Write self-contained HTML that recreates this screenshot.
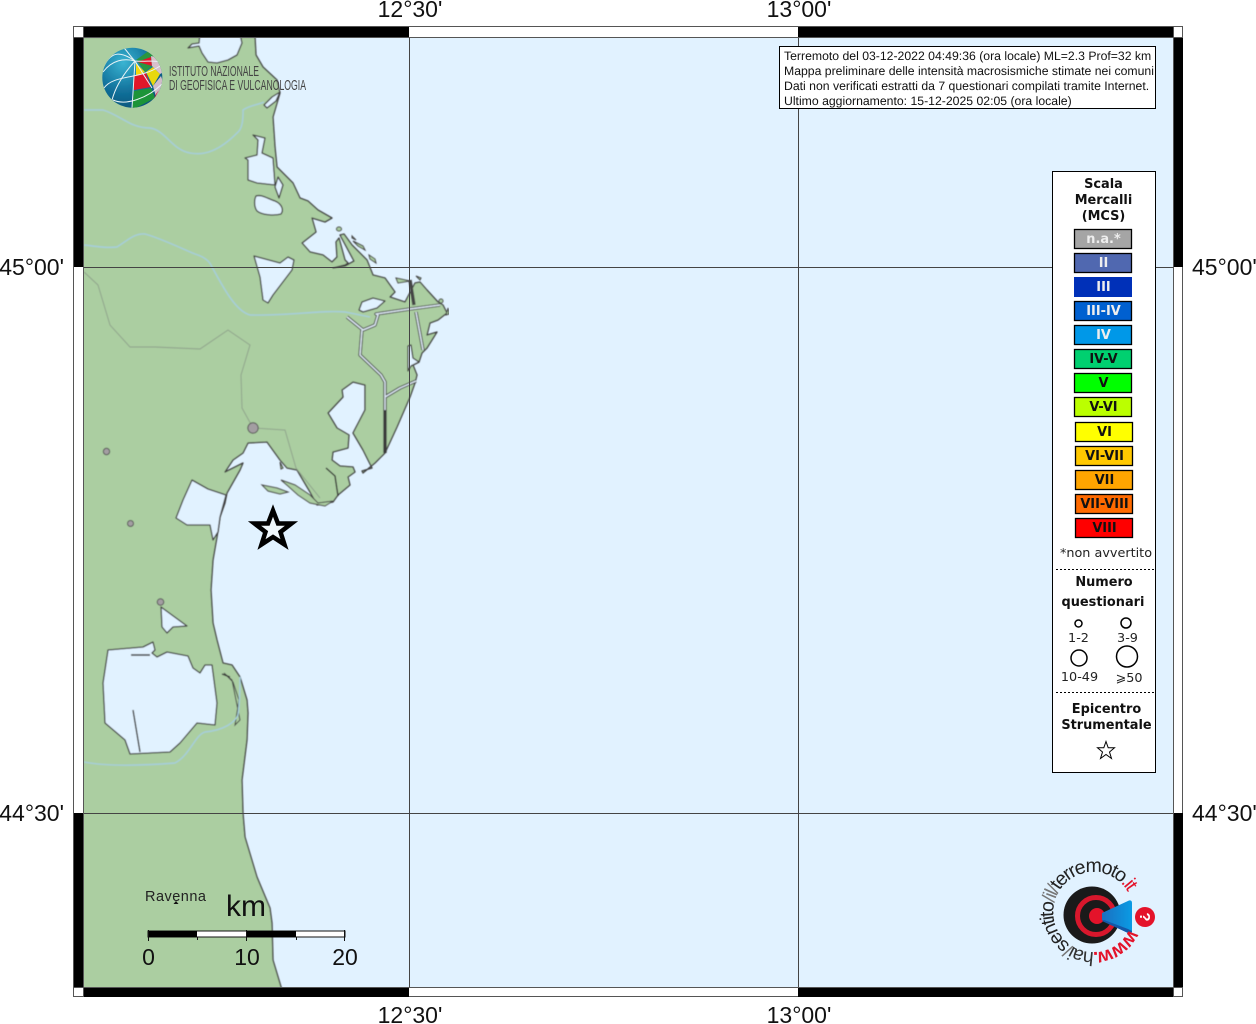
<!DOCTYPE html>
<html><head><meta charset="utf-8"><title>Mappa</title>
<style>html,body{margin:0;padding:0;background:#fff}svg{display:block}
.g{font-family:"Liberation Sans",sans-serif}
.d{font-family:"DejaVu Sans",sans-serif}
.lb{font-family:"DejaVu Sans",sans-serif;font-weight:bold;font-size:12.9px;text-anchor:middle}
</style></head><body>
<svg width="1256" height="1024" viewBox="0 0 1256 1024" xmlns="http://www.w3.org/2000/svg">
<defs>
<radialGradient id="gb" cx="0.35" cy="0.25" r="0.85"><stop offset="0" stop-color="#3ab4d2"/><stop offset="0.55" stop-color="#12729c"/><stop offset="1" stop-color="#0b4f74"/></radialGradient>
<linearGradient id="cone" x1="0" y1="0" x2="1" y2="0"><stop offset="0" stop-color="#1a6fc0"/><stop offset="1" stop-color="#0a9be4"/></linearGradient>
<clipPath id="mc"><rect x="84" y="37" width="1089" height="950"/></clipPath>
<clipPath id="gc"><circle cx="132.3" cy="77.7" r="30"/></clipPath>
<clipPath id="ib"><rect x="780" y="47" width="375" height="61"/></clipPath>
<filter id="soft" x="0" y="0" width="100%" height="100%"><feGaussianBlur stdDeviation="0.45"/></filter>
<filter id="soft2" x="-5%" y="-5%" width="110%" height="110%"><feGaussianBlur stdDeviation="0.35"/></filter>
</defs>

<!-- map -->
<rect x="84" y="37" width="1089" height="950" fill="#e1f2ff"/>
<g clip-path="url(#mc)"><g filter="url(#soft)">
<path id="land" fill="#abcea1" stroke="#3f3f3f" stroke-width="1.300" stroke-linejoin="round" d="M80 37L255 37L256 55L263 67L277 80L280 93L273 117L275 147L277 167L293 183L300 198L308 201L318 210L332 218L325 222L312 218L316 232L302 243L310 252L323 255L332 262L337 257L336 242L339 238L345 260L348 263L345 265L333 268L345 266L354 261L340 235L344 234L352 245L367 260L373 275L385 278L395 292L390 297L405 302L415 283L420 282L427 290L438 302L443 305L447 313L438 320L430 323L427 335L437 332L427 348L422 353L419 362L413 365L417 375L415 383L410 397L397 427L385 453L375 463L363 473L362 471L372 468L363 450L353 433L365 410L365 385L353 382L342 390L343 397L328 413L337 428L349 435L348 448L333 452L332 460L340 466L353 467L355 472L348 477L350 485L338 495L333 502L317 505L310 492L297 470L287 468L280 460L267 442L248 443L243 453L233 460L225 472L243 463L240 470L227 493L225 503L220 517L217 537L213 560L211 590L213 623L217 640L223 663L232 665L240 677L247 700L248 713L247 740L242 780L243 813L245 837L257 877L270 908L272 923L273 960L282 990L80 990Z"/>
<g fill="#e1f2ff" stroke="#3f3f3f" stroke-width="1.300" stroke-linejoin="round">
<path d="M200 34L240 34L242 43L237 55L228 60L217 63L208 62L202 53L199 46L188 48L192 44L199 43Z"/>
<path d="M253 135L265 138L262 153L273 158L275 185L257 183L248 180L248 160L245 158L257 155L258 140Z"/>
<path d="M278 177L283 185L279 198L275 187Z"/>
<path d="M256 196C262 194 268 199 275 201C282 204 284 210 281 214C274 216 262 215 257 211C254 207 254 200 256 196Z"/>
<path d="M264 105L272 97L280 92L276 101L267 108Z"/>
<path d="M254 256L280 263L288 257L294 260L292 270L273 295L268 303L263 300L260 277Z"/>
<path d="M359 310L362 302L373 298L385 301L377 308L363 312Z"/>
<path d="M192 480L208 489L226 495L220 517L218 532L213 540L210 525L187 525L176 518L183 500Z"/>
<path d="M161 607L187 626L173 627L167 633L162 627Z"/>
<path d="M108 650L143 647L153 642L155 650L152 653L157 657L167 652L188 656L193 668L200 673L205 665L212 665L217 703L215 725L197 723L180 743L170 752L130 754L125 740L105 723L103 683Z"/>
<path d="M408 346L411 345L413 358L419 362L411 366L408 371Z"/>
</g>
<!-- islands -->
<g fill="#abcea1" stroke="#444" stroke-width="1">
<path d="M262 485L277 488L288 492L280 494L268 491Z"/>
<path d="M281 480L295 485L310 495L318 503L333 501L325 506L310 503L298 495L288 486Z"/>
<path d="M280 462L283 468L281 469Z"/>
<ellipse cx="339" cy="229" rx="2.5" ry="2"/>
<path d="M352 236L356 240L352 238Z"/>
<path d="M353 241L363 246L365 250L358 246Z"/>
<path d="M369 255L375 259L376 263L370 259Z"/>
<path d="M396 278L410 281L398 283Z"/>
<path d="M416 276L421 278L420 280Z"/>
<ellipse cx="441" cy="301" rx="2" ry="2"/>
<path d="M448 308L449 314L446 315Z"/>
<path d="M224 673L232 680L236 700L240 720L235 725L239 700L233 682Z"/>
</g>
<!-- channels -->
<g fill="none" stroke-linejoin="round">
<path id="ch" stroke="#444" stroke-width="3.400" d="M347 317L363 330L375 325L378 315L376 314L410 309L440 305M362 330L360 355L381 375L385 382L385 453M385 397L400 388L416 381M416 312L423 350M414 305L410 280"/>
<path stroke="#dbe8f2" stroke-width="1.500" d="M347 317L363 330L375 325L378 315L376 314L410 309L440 305M362 330L360 355L381 375L385 382L385 410M385 397L400 388L416 381M416 312L423 350"/>
<path stroke="#333" stroke-width="1.300" d="M385 410L385 453"/>
<path stroke="#333" stroke-width="1.400" d="M326 468L335 476L338 496M131 655L150 655M133 710L140 752M222 674L230 677"/>
</g>
<!-- rivers -->
<g fill="none" stroke="#a6cfdc" stroke-width="1.400">
<path d="M84 110L103 110C120 115 130 128 150 128C165 130 172 150 190 153C205 156 220 150 237 133C244 128 243 112 243 110C250 105 258 105 264 102"/>
<path d="M84 245C100 247 108 248 117 247C128 240 135 233 145 234C160 238 185 250 195 254C205 257 210 262 212 267C222 285 235 311 250 315C290 316 320 310 345 312L370 317"/>
<path d="M84 762C110 767 150 765 175 763C190 755 195 735 205 732C225 730 235 722 238 715C240 700 240 680 240 677"/>
</g>
<!-- region border -->
<path fill="none" stroke="#8d9f8a" stroke-width="0.900" d="M84 272L98 285L110 325L130 347L155 347L200 349L228 330L250 345L241 375L242 408L253 428L285 430L296 468L320 498"/>
<!-- cities -->
<g fill="#a39ea2" stroke="#555" stroke-width="1">
<circle cx="253" cy="428" r="5.200"/><circle cx="106.500" cy="451.500" r="3.200"/><circle cx="130.500" cy="523.500" r="3"/><circle cx="160.500" cy="602" r="3.300"/>
</g>
</g></g>
<!-- grid -->
<g stroke="#444" stroke-width="1"><path d="M409.500 37V987M798.500 37V987M84 267.500H1173M84 813.500H1173"/></g>

<!-- frame -->
<rect x="73.500" y="26.500" width="1109" height="970" fill="none" stroke="#555" stroke-width="1"/>
<g fill="#000">
<rect x="83" y="27" width="326" height="10"/><rect x="798" y="27" width="375" height="10"/>
<rect x="83" y="987" width="326" height="10"/><rect x="798" y="987" width="375" height="10"/>
<rect x="74" y="37" width="10" height="230"/><rect x="74" y="813" width="10" height="174"/>
<rect x="1173" y="37" width="10" height="230"/><rect x="1173" y="813" width="10" height="174"/>
</g>
<path stroke="#555" fill="none" d="M83.500 27V997M1173.500 27V997M74 37.500H1183M74 987.500H1183"/>

<!-- axis labels -->
<g class="g" font-size="23" fill="#111">
<text x="410" y="17" text-anchor="middle">12°30'</text><text x="799" y="17" text-anchor="middle">13°00'</text>
<text x="410" y="1023" text-anchor="middle">12°30'</text><text x="799" y="1023" text-anchor="middle">13°00'</text>
<text x="64" y="275" text-anchor="end">45°00'</text><text x="64" y="821" text-anchor="end">44°30'</text>
<text x="1192" y="275">45°00'</text><text x="1192" y="821">44°30'</text>
</g>

<!-- star -->
<path d="M273 510.500L278 523.500L291.500 523.500L280.500 532L284.500 544.500L273 537L261.500 544.500L265.500 532L254.500 523.500L268 523.500Z" fill="#eef6fb" stroke="#000" stroke-width="4.500" stroke-linejoin="miter"/>

<!-- INGV logo -->
<g filter="url(#soft2)">
<circle cx="132.300" cy="77.700" r="30" fill="url(#gb)"/>
<g clip-path="url(#gc)">
<path d="M160 58L150 50L136 60L152 64Z" fill="#2a9640"/>
<path d="M137 62L151 57L152 66Z" fill="#e0142c"/>
<path d="M136 63L145 72L136 76Z" fill="#f5d80c"/>
<path d="M138 62L152 66L145 72Z" fill="#2a9640"/>
<path d="M146 72L153 67L160 74L153 86Z" fill="#e8d80f"/>
<path d="M134 76L146 73L151 87L134 90Z" fill="#e0142c"/>
<path d="M151 56L160 58L164 72L160 74L152 66Z" fill="#d8c0cc"/>
<path d="M153 86L161 76L164 85L156 97Z" fill="#d0bcc8"/>
<path d="M134 91L151 88L155 98L132 110Z" fill="#1f9438"/>
<path d="M156 94L159 90L153 101Z" fill="#e0142c"/>
<g fill="none" stroke="#e8f3f6" stroke-width="1">
<path d="M135 61C125 72 116 85 112 100"/>
<path d="M135 61C122 52 112 50 104 66"/>
<path d="M135 61L132 108"/>
<path d="M135 61L152 88"/>
<path d="M135 61C130 56 128 52 124 48"/>
<path d="M103 72C112 60 124 58 135 61C145 62 155 60 160 62"/>
<path d="M104 88C114 74 140 80 160 66"/>
<path d="M113 100C126 106 148 98 162 84"/>
</g>
</g>
</g>
<g class="g" fill="#444" font-size="14.500">
<text x="169" y="76" textLength="90" lengthAdjust="spacingAndGlyphs">ISTITUTO NAZIONALE</text>
<text x="169" y="90" textLength="137" lengthAdjust="spacingAndGlyphs">DI GEOFISICA E VULCANOLOGIA</text>
</g>

<!-- info box -->
<rect x="779.500" y="46.500" width="376" height="62" fill="#fff" stroke="#000"/>
<g class="g" font-size="12.240" fill="#111" clip-path="url(#ib)" text-rendering="geometricPrecision">
<text x="784" y="60">Terremoto del 03-12-2022 04:49:36 (ora locale) ML=2.3 Prof=32 km</text>
<text x="784" y="75">Mappa preliminare delle intensità macrosismiche stimate nei comuni</text>
<text x="784" y="90">Dati non verificati estratti da 7 questionari compilati tramite Internet.</text>
<text x="784" y="105">Ultimo aggiornamento: 15-12-2025 02:05 (ora locale)</text>
</g>

<!-- legend -->
<rect x="1052.500" y="171.500" width="103" height="601" fill="#fff" stroke="#000"/>
<g class="lb" fill="#111">
<text x="1103.500" y="188" class="lb">Scala</text>
<text x="1103.500" y="204" class="lb">Mercalli</text>
<text x="1103.500" y="220" class="lb">(MCS)</text>
</g>
<g stroke="#000" stroke-width="1.300">
<rect x="1074.500" y="229.500" width="57" height="19" fill="#a5a5a5"/>
<rect x="1074.500" y="253.500" width="57" height="19" fill="#5068b0"/>
<rect x="1074" y="277" width="58" height="20" fill="#0030b8" stroke="none"/>
<rect x="1074.500" y="301.500" width="57" height="19" fill="#0060d0"/>
<rect x="1074.500" y="325.500" width="57" height="19" fill="#0098e8"/>
<rect x="1074.500" y="349.500" width="57" height="19" fill="#00d070"/>
<rect x="1074.500" y="373.500" width="57" height="19" fill="#00ff00"/>
<rect x="1074.500" y="397.500" width="57" height="19" fill="#bbff00"/>
<rect x="1075.500" y="422.500" width="57" height="19" fill="#ffff00"/>
<rect x="1075.500" y="446.500" width="57" height="19" fill="#ffc800"/>
<rect x="1075.500" y="470.500" width="57" height="19" fill="#ffa500"/>
<rect x="1075.500" y="494.500" width="57" height="19" fill="#ff6a00"/>
<rect x="1075.500" y="518.500" width="57" height="19" fill="#ff0000"/>
</g>
<g>
<text x="1103.500" y="243" class="lb" fill="#eee">n.a.*</text>
<text x="1103.500" y="267" class="lb" fill="#eee">II</text>
<text x="1103.500" y="291" class="lb" fill="#eee">III</text>
<text x="1103.500" y="315" class="lb" fill="#eee">III-IV</text>
<text x="1103.500" y="339" class="lb" fill="#eee">IV</text>
<text x="1103.500" y="363" class="lb" fill="#111">IV-V</text>
<text x="1103.500" y="387" class="lb" fill="#111">V</text>
<text x="1103.500" y="411" class="lb" fill="#111">V-VI</text>
<text x="1104.500" y="436" class="lb" fill="#111">VI</text>
<text x="1104.500" y="460" class="lb" fill="#111">VI-VII</text>
<text x="1104.500" y="484" class="lb" fill="#111">VII</text>
<text x="1104.500" y="508" class="lb" fill="#111">VII-VIII</text>
<text x="1104.500" y="532" class="lb" fill="#111">VIII</text>
</g>
<text x="1106" y="557" class="d" font-size="12.800" fill="#222" text-anchor="middle">*non avvertito</text>
<path d="M1056 569.500H1154M1056 692.500H1154" stroke="#000" stroke-dasharray="2 2" fill="none"/>
<text x="1104" y="586" class="lb" fill="#111">Numero</text>
<text x="1103" y="606" class="lb" fill="#111">questionari</text>
<g fill="#fff" stroke="#000" stroke-width="1.500">
<circle cx="1078.500" cy="623.500" r="3.500"/><circle cx="1126" cy="623" r="5"/><circle cx="1079" cy="658" r="8"/><circle cx="1127" cy="656.500" r="10.500"/>
</g>
<g class="d" font-size="12.800" fill="#222" text-anchor="middle">
<text x="1078.500" y="642">1-2</text><text x="1127.500" y="642">3-9</text><text x="1079.500" y="681">10-49</text><text x="1129" y="682">⩾50</text>
</g>
<text x="1106.500" y="713" class="lb" fill="#111">Epicentro</text>
<text x="1106.500" y="729" class="lb" fill="#111">Strumentale</text>
<path d="M1106 741.500L1108.200 747.800L1114.500 747.800L1109.500 752L1111.500 758.500L1106 754.500L1100.500 758.500L1102.500 752L1097.500 747.800L1103.800 747.800Z" fill="#fff" stroke="#000" stroke-width="1"/>

<!-- scale bar -->
<text x="145" y="901" class="g" font-size="14.500" fill="#222" textLength="61">Ravenna</text>
<path d="M176 901L178.500 904H173.500Z" fill="#111"/>
<text x="226" y="916" class="g" font-size="30" fill="#111">km</text>
<rect x="148" y="931" width="197" height="6" fill="#fff" stroke="#111" stroke-width="1"/>
<rect x="148" y="931" width="49" height="6" fill="#000"/><rect x="246" y="931" width="50" height="6" fill="#000"/>
<path d="M148.500 930V941M197.500 937V940M246.500 930V941M296.500 937V940M344.500 930V941" stroke="#111" stroke-width="1" fill="none"/>
<g class="g" font-size="23" fill="#111" text-anchor="middle">
<text x="148.500" y="965">0</text><text x="247" y="965">10</text><text x="345" y="965">20</text>
</g>

<!-- haisentito logo -->
<circle cx="1092" cy="915" r="28.500" fill="#1a1a1a"/>
<circle cx="1096" cy="916" r="18.500" fill="none" stroke="#d8172c" stroke-width="5"/>
<circle cx="1097" cy="916" r="8" fill="#e4132a"/>
<path d="M1102 913L1129 900.500Q1132 900 1132 903L1132 931Q1132 934 1128 933L1102 920Z" fill="url(#cone)"/>
<path d="M1104 920L1128 929L1132 931Q1132 934 1128 933L1102 921Z" fill="#1458a8"/>
<circle cx="1145" cy="917" r="10" fill="#e4132a"/>
<text x="1145" y="922" transform="rotate(90 1145 917)" class="g" font-size="15" font-weight="bold" fill="#fff" text-anchor="middle">?</text>
<path id="ring" d="M1129.500 929A40 40 0 1 1 1129.500 895" fill="none"/>
<text class="g" font-size="19.500" fill="#222" letter-spacing="-1.500"><textPath href="#ring"><tspan fill="#e4132a" font-weight="bold">www.</tspan><tspan fill="#333">hai</tspan><tspan fill="#777">/</tspan>sentito<tspan fill="#777">/il/</tspan>terremoto<tspan fill="#e4132a">.it</tspan></textPath></text>
</svg>
</body></html>
